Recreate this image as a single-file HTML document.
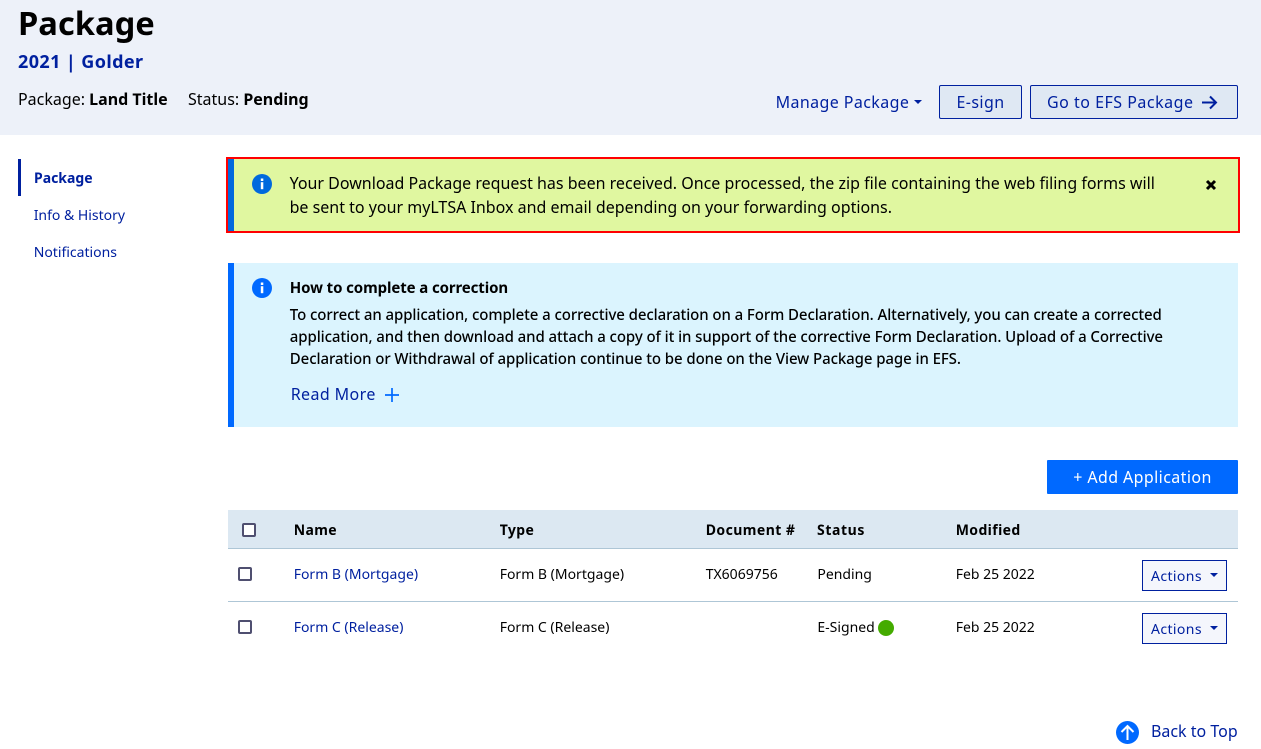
<!DOCTYPE html>
<html lang="en"><head><meta charset="utf-8"><title>Package</title>
<style>
html,body{margin:0;padding:0;background:#fff}
body{width:1261px;height:749px;position:relative;overflow:hidden;font-family:"Noto Sans","Noto Sans CJK JP","DejaVu Sans",sans-serif;color:#000}
.t{position:absolute;white-space:nowrap;line-height:1}
.b{position:absolute;box-sizing:border-box}
.l{color:#00209f}
b{font-weight:700}
svg{position:absolute;display:block}
</style></head><body>
<div class="b" style="left:0;top:0;width:1261px;height:135px;background:#edf1f9"></div>
<div class="t" style="left:18px;top:5px;font-size:32.7px;font-weight:700;line-height:36px">Package</div>
<div class="t l" style="left:18px;top:51px;font-size:18px;font-weight:700;line-height:22px;letter-spacing:.4px">2021 | Golder</div>
<div class="t" style="left:18px;top:89px;font-size:16px;line-height:20px">Package: <b>Land Title</b></div>
<div class="t" style="left:188px;top:89px;font-size:16px;line-height:20px">Status: <b>Pending</b></div>
<div class="t l" style="left:775.6px;top:92px;font-size:16px;line-height:20px;letter-spacing:.4px">Manage Package</div>
<svg style="left:914px;top:100px" width="9" height="5"><path d="M0 0H8L4 4Z" fill="#00209f"/></svg>
<div class="b l" style="left:939px;top:85px;width:83px;height:34px;border:1px solid #00209f;border-radius:2px;background:#dfe8f3;font-size:16px;line-height:32px;text-align:center;letter-spacing:.4px">E-sign</div>
<div class="b l" style="left:1030px;top:85px;width:208px;height:34px;border:1px solid #00209f;border-radius:2px;background:#dfe8f3;font-size:16px;line-height:32px;padding-left:16px;letter-spacing:.5px;white-space:nowrap">Go to EFS Package</div>
<svg style="left:1201px;top:94px" width="17" height="17" viewBox="0 0 17 17"><path d="M1 8.5H15M9 2.5L15 8.5L9 14.5" fill="none" stroke="#00209f" stroke-width="2"/></svg>

<div class="b" style="left:18px;top:159px;width:3px;height:37px;background:#00209f"></div>
<div class="t l" style="left:34px;top:168.5px;font-size:14px;font-weight:700;line-height:20px">Package</div>
<div class="t l" style="left:33.7px;top:205.5px;font-size:14px;line-height:20px">Info &amp; History</div>
<div class="t l" style="left:33.7px;top:242.5px;font-size:14px;line-height:20px">Notifications</div>

<div class="b" style="left:226px;top:157px;width:1013.5px;height:76px;background:#e0f7a0;border:2px solid #f00"></div>
<div class="b" style="left:228px;top:159px;width:6px;height:72px;background:#0069dd"></div>
<svg style="left:252px;top:174px" width="20" height="20" viewBox="0 0 20 20"><circle cx="10" cy="10" r="10" fill="#0069dd"/><rect x="8.8" y="4.5" width="2.5" height="2.5" fill="#fff"/><rect x="8.8" y="8.2" width="2.5" height="7" fill="#fff"/></svg>
<div class="t" style="left:289.6px;top:173px;font-size:16px;line-height:20px">Your Download Package request has been received. Once processed, the zip file containing the web filing forms will</div>
<div class="t" style="left:289.6px;top:197px;font-size:16px;line-height:20px">be sent to your myLTSA Inbox and email depending on your forwarding options.</div>
<svg style="left:1205px;top:178.5px" width="12" height="12" viewBox="0 0 12 12"><path d="M2 2L10 10M10 2L2 10" stroke="#000" stroke-width="3"/></svg>

<div class="b" style="left:228px;top:263px;width:1010px;height:164px;background:#dbf4fe"></div>
<div class="b" style="left:228px;top:263px;width:6px;height:164px;background:#0069ff"></div>
<svg style="left:252px;top:278px" width="20" height="20" viewBox="0 0 20 20"><circle cx="10" cy="10" r="10" fill="#0069ff"/><rect x="8.8" y="4.5" width="2.5" height="2.5" fill="#fff"/><rect x="8.8" y="8.2" width="2.5" height="7" fill="#fff"/></svg>
<div class="t" style="left:289.8px;top:278px;font-size:15px;font-weight:700;line-height:20px;letter-spacing:-.1px">How to complete a correction</div>
<div class="t" style="left:289.8px;top:305px;font-size:15px;font-weight:500;line-height:20px;letter-spacing:-.085px">To correct an application, complete a corrective declaration on a Form Declaration. Alternatively, you can create a corrected</div>
<div class="t" style="left:289.8px;top:327px;font-size:15px;font-weight:500;line-height:20px;letter-spacing:-.085px">application, and then download and attach a copy of it in support of the corrective Form Declaration. Upload of a Corrective</div>
<div class="t" style="left:289.8px;top:349px;font-size:15px;font-weight:500;line-height:20px;letter-spacing:-.085px">Declaration or Withdrawal of application continue to be done on the View Package page in EFS.</div>
<div class="t l" style="left:290.7px;top:384px;font-size:16px;line-height:20px;letter-spacing:.4px">Read More</div>
<svg style="left:385px;top:388px" width="14" height="14" viewBox="0 0 14 14"><path d="M7 0V14M0 7H14" stroke="#0069ff" stroke-width="1.7"/></svg>

<div class="b" style="left:1047px;top:460px;width:191px;height:34px;background:#0069ff;border-radius:1px;color:#fff;font-size:16px;line-height:34px;text-align:center;letter-spacing:.4px;white-space:nowrap">+ Add Application</div>

<div class="b" style="left:228px;top:510px;width:1010px;height:39px;background:#dce8f2;border-bottom:1px solid #aec6d6"></div>
<div class="b" style="left:242px;top:523px;width:14px;height:14px;border:2px solid #4f4f70;border-radius:2px;background:#fff"></div>
<div class="t" style="left:293.7px;top:521px;font-size:14px;font-weight:700;line-height:20px;letter-spacing:.4px">Name</div>
<div class="t" style="left:499.7px;top:521px;font-size:14px;font-weight:700;line-height:20px;letter-spacing:.4px">Type</div>
<div class="t" style="left:705.7px;top:521px;font-size:14px;font-weight:700;line-height:20px;letter-spacing:.45px">Document #</div>
<div class="t" style="left:817px;top:521px;font-size:14px;font-weight:700;line-height:20px;letter-spacing:.6px">Status</div>
<div class="t" style="left:955.7px;top:521px;font-size:14px;font-weight:700;line-height:20px;letter-spacing:.4px">Modified</div>

<div class="b" style="left:238px;top:567px;width:14px;height:14px;border:2px solid #4f4f70;border-radius:2px;background:#fff"></div>
<div class="t l" style="left:293.7px;top:565px;font-size:14px;line-height:20px">Form B (Mortgage)</div>
<div class="t" style="left:499.7px;top:565px;font-size:14px;line-height:20px">Form B (Mortgage)</div>
<div class="t" style="left:705.7px;top:565px;font-size:14px;line-height:20px">TX6069756</div>
<div class="t" style="left:817.4px;top:565px;font-size:14px;line-height:20px">Pending</div>
<div class="t" style="left:955.7px;top:565px;font-size:14px;line-height:20px">Feb 25 2022</div>
<div class="b l" style="left:1142px;top:560px;width:85px;height:31px;border:1px solid #00209f;background:#f4f6fc;font-size:14px;line-height:30px;padding:1px 0 0 8px;letter-spacing:.4px">Actions</div>
<svg style="left:1210px;top:573px" width="9" height="5"><path d="M0 0H8L4 4Z" fill="#00209f"/></svg>

<div class="b" style="left:228px;top:601px;width:1010px;height:1px;background:#aec6d6"></div>

<div class="b" style="left:238px;top:620px;width:14px;height:14px;border:2px solid #4f4f70;border-radius:2px;background:#fff"></div>
<div class="t l" style="left:293.7px;top:618px;font-size:14px;line-height:20px">Form C (Release)</div>
<div class="t" style="left:499.7px;top:618px;font-size:14px;line-height:20px">Form C (Release)</div>
<div class="t" style="left:817.4px;top:618px;font-size:14px;line-height:20px">E-Signed</div>
<div class="b" style="left:878px;top:620px;width:16px;height:16px;border-radius:50%;background:#44ab00"></div>
<div class="t" style="left:955.7px;top:618px;font-size:14px;line-height:20px">Feb 25 2022</div>
<div class="b l" style="left:1142px;top:613px;width:85px;height:31px;border:1px solid #00209f;background:#f4f6fc;font-size:14px;line-height:30px;padding:1px 0 0 8px;letter-spacing:.4px">Actions</div>
<svg style="left:1210px;top:626px" width="9" height="5"><path d="M0 0H8L4 4Z" fill="#00209f"/></svg>

<svg style="left:1116px;top:721px" width="23" height="23" viewBox="0 0 23 23"><circle cx="11.5" cy="11.5" r="11.5" fill="#0069ff"/><path d="M11.5 19V5M5.5 11L11.5 5L17.5 11" fill="none" stroke="#fff" stroke-width="2"/></svg>
<div class="t l" style="left:1151px;top:721px;font-size:16px;line-height:20px">Back to Top</div>
</body></html>
